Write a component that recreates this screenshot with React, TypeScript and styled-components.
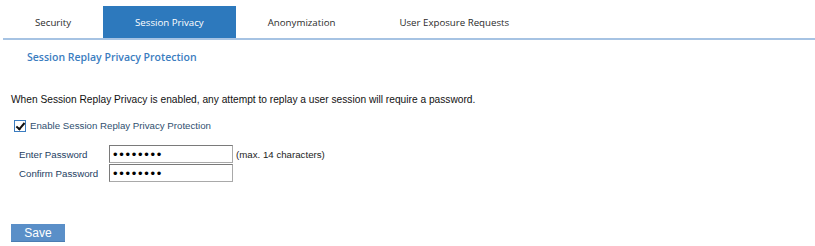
import styled, {createGlobalStyle} from "styled-components";

const GlobalStyle = createGlobalStyle`
  body {
    margin: 0;
    background: #fff;
    font-family: "Liberation Sans", Arial, sans-serif;
  }
`

const tabs = ["Security", "Session Privacy", "Anonymization", "User Exposure Requests"]

export default function App() {
    return (
        <Page>
            <GlobalStyle/>
            <TabBar>
                {tabs.map(t => (
                    <Tab key={t} $active={t === "Session Privacy"}>{t}</Tab>
                ))}
            </TabBar>
            <Heading>Session Replay Privacy Protection</Heading>
            <Intro>When Session Replay Privacy is enabled, any attempt to replay a user session will require a password.</Intro>
            <CheckRow>
                <Check type="checkbox" defaultChecked/>
                <span>Enable Session Replay Privacy Protection</span>
            </CheckRow>
            <Form>
                <Label>Enter Password</Label>
                <Field type="password" defaultValue="password"/>
                <Hint>(max. 14 characters)</Hint>
                <Label>Confirm Password</Label>
                <Field type="password" defaultValue="password"/>
            </Form>
            <SaveButton>Save</SaveButton>
        </Page>
    )
}

const Page = styled.div`
  width: 815px;
  height: 246px;
  overflow: hidden;
  padding: 6px 0 0 3px;
  box-sizing: border-box;
`
const TabBar = styled.div`
  display: flex;
  height: 32px;
  border-bottom: 2px solid #a6c3e3;
`
const Tab = styled.div<{ $active?: boolean }>`
  display: flex;
  align-items: center;
  padding: 0 32px;
  font-family: "Open Sans", sans-serif;
  font-size: 9.7px;
  color: ${p => p.$active ? "#fff" : "#2b2b2b"};
  background: ${p => p.$active ? "#2d79bd" : "transparent"};
`
const Heading = styled.h2`
  margin: 10px 0 0 24px;
  font-family: "Open Sans", sans-serif;
  font-size: 10.5px;
  font-weight: 600;
  color: #3b7dbf;
  line-height: 14px;
`
const Intro = styled.p`
  margin: 29px 0 0 8px;
  font-size: 10.2px;
  color: #111;
  line-height: 14px;
`
const CheckRow = styled.label`
  display: flex;
  align-items: center;
  gap: 4px;
  margin: 12px 0 0 11px;
  font-size: 9.7px;
  color: #2f4f6f;

  span {
    line-height: 14px;
  }
`
const Check = styled.input`
  appearance: none;
  position: relative;
  width: 12px;
  height: 12px;
  margin: 0;
  border: 1px solid #3a7cc0;
  background: #fff;

  &:checked::after {
    content: "";
    position: absolute;
    left: 3px;
    top: 0;
    width: 3px;
    height: 7px;
    border: solid #111;
    border-width: 0 2px 2px 0;
    transform: rotate(40deg);
  }
`
const Form = styled.div`
  display: grid;
  grid-template-columns: 90px 124px auto;
  row-gap: 1px;
  align-items: center;
  margin: 12px 0 0 16px;
  font-size: 9.7px;
`
const Label = styled.span`
  color: #24405f;
  grid-column: 1;
`
const Field = styled.input`
  box-sizing: border-box;
  width: 124px;
  height: 18px;
  margin: 0;
  padding: 0 3px;
  border: 1px solid #a9a9a9;
  border-top-color: #7a7a7a;
  border-left-color: #7a7a7a;
  font-family: "Liberation Sans", Arial, sans-serif;
  font-size: 13px;
  letter-spacing: 1.7px;
`
const Hint = styled.span`
  padding-left: 3px;
  color: #222;
`
const SaveButton = styled.button`
  display: block;
  margin: 42px 0 0 8px;
  width: 54px;
  height: 18px;
  padding: 0;
  border: none;
  border-bottom: 1px solid #4a7db3;
  background: #5a8fc8;
  color: #fff;
  font-family: "Liberation Sans", Arial, sans-serif;
  font-size: 12px;
`
